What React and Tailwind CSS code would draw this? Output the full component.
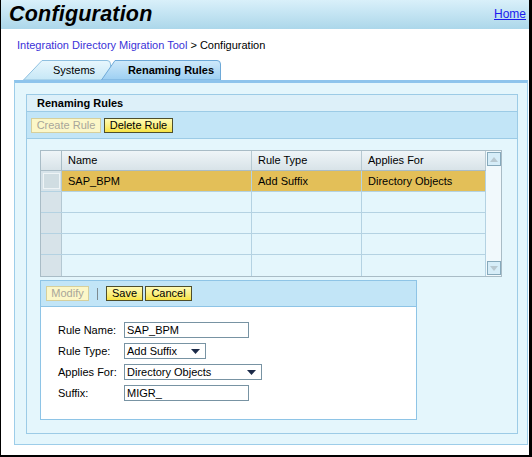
import React from 'react';

const Btn = ({ children, disabled, w }) => (
  <div
    className={
      'h-[15px] flex items-center justify-center text-[11px] leading-none border ' +
      (disabled
        ? 'border-[#d6cf9c] bg-[#fcf7c8] text-[#a8a69a]'
        : 'border-[#4e4e2c] bg-gradient-to-b from-[#fffbb4] to-[#f7e340] text-black')
    }
    style={{ width: w }}
  >
    {children}
  </div>
);

const Tab = ({ label, active, w, slant }) => (
  <div className="relative h-[20px] flex items-center" style={{ width: w }}>
    <svg className="absolute inset-0" width={w} height="20" viewBox={`0 0 ${w} 20`}>
      <defs>
        <linearGradient id={active ? 'ta' : 'ts'} x1="0" y1="0" x2="0" y2="1">
          <stop offset="0" stopColor={active ? '#cfe9fa' : '#e8f7fd'} />
          <stop offset="1" stopColor={active ? '#9ccff2' : '#c6e7f6'} />
        </linearGradient>
      </defs>
      <path
        d={`M0.5 20 L${slant} 0.5 L${w - 4} 0.5 Q${w - 0.5} 0.5 ${w - 0.5} 4 L${w - 0.5} 20 Z`}
        fill={`url(#${active ? 'ta' : 'ts'})`}
        stroke={active ? '#6ea9d8' : '#8fc0e0'}
      />
    </svg>
    <span
      className={'relative w-full text-center text-[11px] text-black ' + (active ? 'font-bold pl-[20px]' : 'pl-[14px]')}
    >
      {label}
    </span>
  </div>
);

const cols = [190, 110, 124];

const ScrollBtn = ({ up }) => (
  <div className="w-[14px] h-[14px] border border-[#86a9bb] bg-[#d6edf8] flex items-center justify-center">
    <svg width="8" height="5" viewBox="0 0 8 5">
      <path d={up ? 'M0 5 L4 0 L8 5 Z' : 'M0 0 L4 5 L8 0 Z'} fill="#b8c8d0" />
    </svg>
  </div>
);

const Field = ({ label, children }) => (
  <div className="flex items-center h-[16px] mb-[5px]">
    <div className="w-[66px] text-[11px]">{label}</div>
    {children}
  </div>
);

const Select = ({ value, w }) => (
  <div
    className="h-[16px] border border-[#7893a3] bg-white flex items-center justify-between pl-[2px] pr-[5px] text-[11px]"
    style={{ width: w }}
  >
    <span>{value}</span>
    <svg width="9" height="5" viewBox="0 0 9 5">
      <path d="M0 0 L9 0 L4.5 5 Z" fill="#1c2a48" />
    </svg>
  </div>
);

const App = () => {
  return (
    <div className="w-[532px] h-[457px] box-border overflow-hidden bg-white border-l border-r-[3px] border-b-2 border-black font-['Liberation_Sans',Arial,sans-serif] text-[11px] text-black">
      {/* Header */}
      <div className="h-[29px] bg-gradient-to-b from-[#d9f0fa] to-[#acd7ea] flex items-center justify-between pl-[8px]">
        <div className="text-[21.5px] font-bold italic leading-none tracking-[0.2px]">Configuration</div>
        <a className="text-[12px] text-[#1a1aee] underline mr-[1px] mb-[2px] w-[34px] overflow-hidden whitespace-nowrap">Home</a>
      </div>

      {/* Breadcrumb */}
      <div className="mt-[10px] pl-[16px] h-[13px] leading-[13px]">
        <span className="text-[#3a32d8]">Integration Directory Migration Tool</span>
        <span> &gt; Configuration</span>
      </div>

      {/* Tabs */}
      <div className="mt-[8px] pl-[22px] flex">
        <Tab label="Systems" w={88} slant={19} />
        <div className="ml-[-10px]">
          <Tab label="Renaming Rules" w={120} slant={14} active />
        </div>
      </div>

      {/* Outer panel */}
      <div className="ml-[13px] w-[514px] h-[365px] bg-[#e4f6fc] border-t-[3px] border-t-[#8ec4ec] border-x border-b border-[#9dcde9] pt-[11px] pl-[11px]">
        {/* Group */}
        <div className="w-[492px] h-[340px] border border-[#9ccbe6]">
          <div className="h-[17px] bg-[#ddf0f9] border-b border-[#9ccbe6] flex items-center pl-[10px] font-bold">
            Renaming Rules
          </div>
          <div className="h-[27px] bg-[#c2e5f7] border-b border-[#9ccbe6] flex items-center gap-[3px] pl-[4px]">
            <Btn disabled w={70}>Create Rule</Btn>
            <Btn w={69}>Delete Rule</Btn>
          </div>

          {/* Table */}
          <div className="ml-[13px] mt-[11px] w-[462px] border border-[#a9bcc6] flex">
            <div className="flex-1">
              <div className="h-[20px] flex border-b border-[#a9bcc6] bg-gradient-to-b from-[#eff5f8] to-[#d8e3e8]">
                <div className="w-[21px] border-r border-[#a9bcc6]" />
                {['Name', 'Rule Type', 'Applies For'].map((h, i) => (
                  <div
                    key={h}
                    className="border-r border-[#b7c9d2] flex items-center pl-[6px]"
                    style={{ width: cols[i] }}
                  >
                    {h}
                  </div>
                ))}
              </div>
              {[0, 1, 2, 3, 4].map((r) => (
                <div key={r} className={'h-[21px] flex border-b border-[#b4d2e2] ' + (r === 4 ? 'border-b-0 h-[20px]' : '')}>
                  <div className="w-[21px] bg-[#d7e3e9] border-r border-[#b4c8d2] flex items-center justify-center">
                    {r === 0 && <div className="w-[17px] h-[16px] bg-[#d0dde2] border border-[#eef4f6]" />}
                  </div>
                  {['SAP_BPM', 'Add Suffix', 'Directory Objects'].map((c, i) => (
                    <div
                      key={i}
                      className={'border-r border-[#b4d2e2] flex items-center pl-[6px] ' + (r === 0 ? 'bg-[#e3bf58]' : 'bg-[#e4f6fc]')}
                      style={{ width: cols[i] }}
                    >
                      {r === 0 ? c : ''}
                    </div>
                  ))}
                </div>
              ))}
            </div>
            <div className="w-[16px] bg-[#f1f9fc] flex flex-col justify-between items-center py-[1px]">
              <ScrollBtn up />
              <ScrollBtn />
            </div>
          </div>

          {/* Detail panel */}
          <div className="ml-[13px] mt-[3px] w-[377px] border border-[#8ec4e6]">
            <div className="h-[26px] bg-[#c2e5f7] border-b border-[#8ec4e6] flex items-center pl-[5px]">
              <Btn disabled w={43}>Modify</Btn>
              <div className="w-px h-[12px] bg-[#7d8a90] mx-[8px]" />
              <Btn w={37}>Save</Btn>
              <div className="w-[2px]" />
              <Btn w={47}>Cancel</Btn>
            </div>
            <div className="bg-white h-[112px] pt-[15px] pl-[17px]">
              <Field label="Rule Name:">
                <div className="w-[125px] h-[16px] border border-[#7893a3] pl-[2px] flex items-center">SAP_BPM</div>
              </Field>
              <Field label="Rule Type:">
                <Select value="Add Suffix" w={82} />
              </Field>
              <Field label="Applies For:">
                <Select value="Directory Objects" w={138} />
              </Field>
              <Field label="Suffix:">
                <div className="w-[125px] h-[16px] border border-[#7893a3] pl-[2px] flex items-center">MIGR_</div>
              </Field>
            </div>
          </div>
        </div>
      </div>
    </div>
  );
};

export default App;
